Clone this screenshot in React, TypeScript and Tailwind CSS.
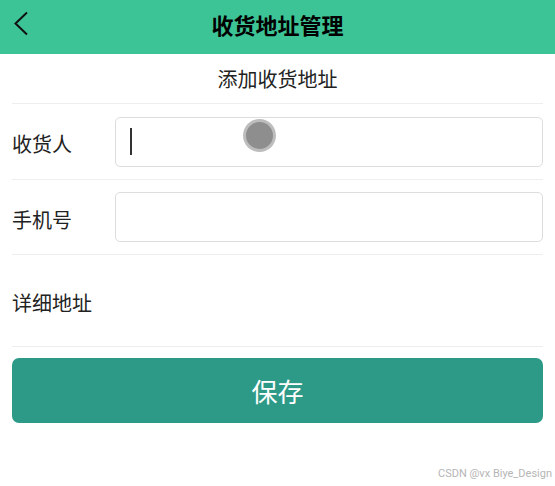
import React from "react";

const font = { fontFamily: '"Noto Sans CJK SC", "Noto Sans", sans-serif' };

export default function App() {
  return (
    <div className="relative w-[555px] h-[486px] bg-white overflow-hidden" style={font}>
      <div className="relative h-[54px] bg-[#3dc496] flex items-center justify-center">
        <svg className="absolute left-[12px] top-[11px]" width="18" height="26" viewBox="0 0 18 26">
          <path d="M15 1.5 L3.5 12.5 L15 23.5" fill="none" stroke="#111" strokeWidth="2" />
        </svg>
        <div className="text-[22px] font-bold text-black leading-none pb-[7px]">收货地址管理</div>
      </div>
      <div className="mx-[12px]">
        <div className="h-[50px] flex items-center justify-center text-[20px] text-[#222] border-b border-[#eeeeee]">
          添加收货地址
        </div>
        <div className="h-[76px] flex items-center border-b border-[#eeeeee]">
          <div className="w-[103px] text-[20px] text-[#222] pt-[5px]">收货人</div>
          <div className="relative flex-1 h-[50px] border border-[#dddddd] rounded-[5px] flex items-center pl-[14px]">
            <div className="w-[2px] h-[27px] bg-[#333]" />
            <div className="absolute left-[127px] top-[1px] w-[33px] h-[33px] rounded-full bg-[#bdbdbd] flex items-center justify-center">
              <div className="w-[27px] h-[27px] rounded-full bg-[#8e8e8e]" />
            </div>
          </div>
        </div>
        <div className="h-[75px] flex items-center border-b border-[#eeeeee]">
          <div className="w-[103px] text-[20px] text-[#222] pt-[5px]">手机号</div>
          <div className="flex-1 h-[50px] border border-[#dddddd] rounded-[5px]" />
        </div>
        <div className="h-[92px] flex items-center border-b border-[#eeeeee]">
          <div className="text-[20px] text-[#222] pt-[4px]">详细地址</div>
        </div>
        <div className="mt-[11px] h-[65px] rounded-[7px] bg-[#2d9a88] flex items-center justify-center text-white text-[26px]">
          保存
        </div>
      </div>
      <div
        className="absolute right-[3px] bottom-[4px] text-[11px] text-[#b5b5b5]"
        style={{ fontFamily: '"Liberation Sans Narrow", "Roboto", sans-serif' }}
      >
        CSDN @vx Biye_Design
      </div>
    </div>
  );
}
